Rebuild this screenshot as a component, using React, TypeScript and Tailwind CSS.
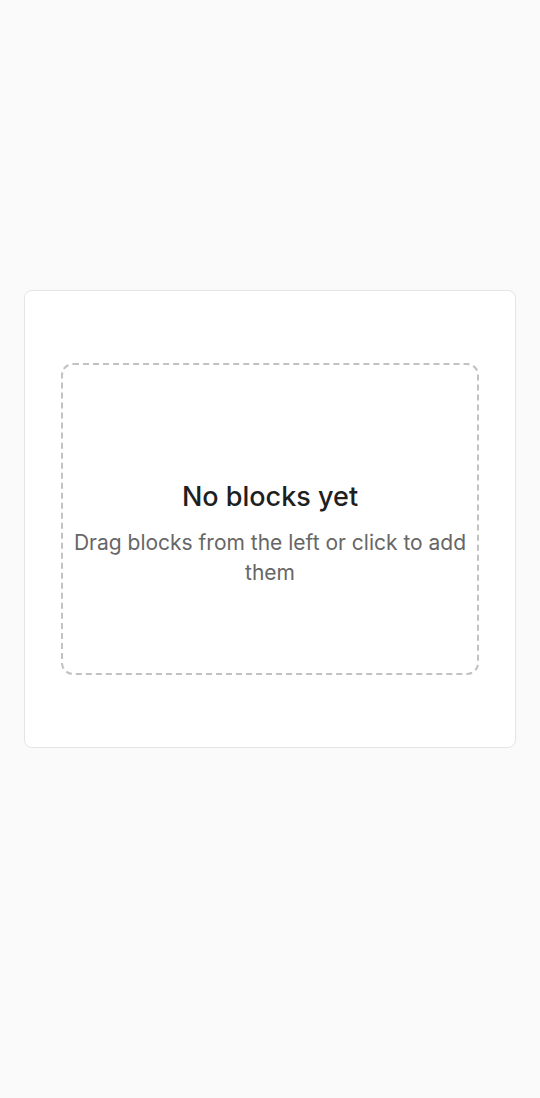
import React from 'react';

const EmptyCanvas: React.FC = () => (
  <div className="rounded-xl border-2 border-dashed border-[#c2c2c2] bg-white px-2 pt-[116px] pb-[85px] text-center">
    <h2 className="text-[27px] leading-8 font-medium text-[#1f1f1f] mb-[15px]">No blocks yet</h2>
    <p className="text-[21px] leading-[30px] text-[#666666]">Drag blocks from the left or click to add them</p>
  </div>
);

export default function App() {
  return (
    <div className="min-h-[1098px] bg-[#fafafa] px-6 pt-[290px] font-['Inter',sans-serif]">
      <div className="rounded-lg border border-[#e5e5e5] bg-white px-9 py-[72px]">
        <EmptyCanvas />
      </div>
    </div>
  );
}
